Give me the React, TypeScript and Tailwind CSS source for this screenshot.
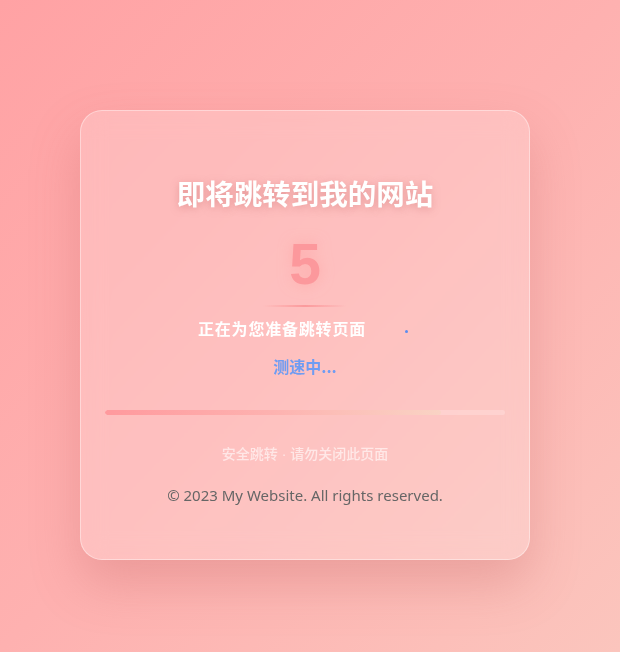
import React from 'react';

const cjk = '"Noto Sans CJK SC", "Noto Sans", sans-serif';

const App: React.FC = () => {
  return (
    <div
      className="h-[652px] w-full flex items-center justify-center pt-[18px] pr-[10px] bg-gradient-to-br from-[#ffa2a4] via-[#feb1b0] to-[#fbc5bd]"
      style={{ fontFamily: cjk }}
    >
      {/* Card */}
      <div className="w-[450px] h-[450px] rounded-[22px] border border-white/40 bg-white/20 backdrop-blur-md shadow-[0_24px_50px_rgba(190,90,90,0.28)] px-6 pt-[61px] flex flex-col items-center">
        <h1 className="text-[28.5px] leading-[42px] font-bold text-white [text-shadow:0_2px_8px_rgba(180,80,80,0.35)]">
          即将跳转到我的网站
        </h1>

        <div
          className="mt-[22px] text-[57px] leading-[56px] font-bold text-[#fc989c] [text-shadow:0_0_14px_rgba(255,160,160,0.6)]"
          style={{ fontFamily: '"Liberation Sans", Arial, sans-serif' }}
        >
          5
        </div>
        <div className="mt-[13px] h-[2px] w-[84px] rounded-full bg-gradient-to-r from-transparent via-[#fb9a9c] to-transparent" />

        <div className="mt-[9px] flex items-center">
          <span className="text-[16px] leading-6 font-semibold text-white tracking-[0.8px]">正在为您准备跳转页面</span>
          <span className="ml-[4px] w-[42px] flex items-center justify-end gap-[4px] pr-[4px]">
            <span className="w-[3px] h-[3px] rounded-full bg-[#5b8def] opacity-0" />
            <span className="w-[3px] h-[3px] rounded-full bg-[#5b8def] opacity-0" />
            <span className="w-[3px] h-[3px] rounded-full bg-[#5b8def] mt-[6px]" />
          </span>
        </div>

        <div className="mt-[14px] text-[16px] leading-6 font-semibold text-[#6f9cf2]">测速中...</div>

        {/* Progress */}
        <div className="mt-[32px] w-full h-[5px] rounded-full bg-white/20 overflow-hidden">
          <div className="h-full w-[84%] rounded-full bg-gradient-to-r from-[#ff999d] via-[#fdb2b0] to-[#f9d3c4]" />
        </div>

        <div className="mt-[28px] text-[14px] leading-5 text-white/60 font-medium">
          安全跳转
          <span style={{ fontFamily: '"Liberation Sans", Arial, sans-serif' }}> · </span>
          请勿关闭此页面
        </div>

        <div
          className="mt-[20px] text-[15px] leading-[22px] text-[#666]"
          style={{ fontFamily: '"Noto Sans", "Open Sans", sans-serif' }}
        >
          © 2023 My Website. All rights reserved.
        </div>
      </div>
    </div>
  );
};

export default App;
